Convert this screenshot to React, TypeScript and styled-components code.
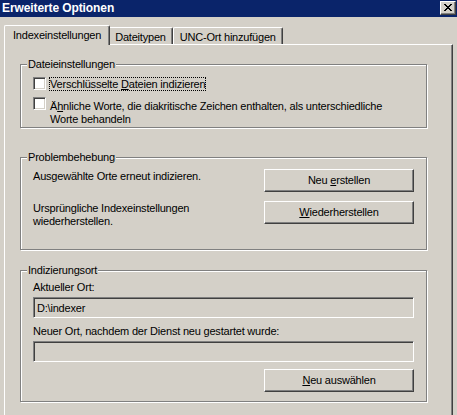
import React from "react";
import styled, { createGlobalStyle } from "styled-components";

const GlobalStyle = createGlobalStyle`
  html, body {
    margin: 0;
    padding: 0;
    background: #d4d0c8;
  }
  * { box-sizing: border-box; }
`;

const Window = styled.div`
  width: 457px;
  height: 415px;
  overflow: hidden;
  background: #d4d0c8;
  display: flex;
  flex-direction: column;
  font-family: "Liberation Sans", Arial, sans-serif;
  font-size: 11px;
  letter-spacing: -0.2px;
  line-height: 13px;
  color: #000;
`;

const TitleBar = styled.div`
  height: 17px;
  flex: none;
  background: #0a246a;
  display: flex;
  align-items: flex-start;
  justify-content: space-between;
  padding: 0 1px 0 2px;
`;

const TitleText = styled.span`
  color: #fff;
  font-weight: bold;
  font-size: 12px;
  letter-spacing: -0.1px;
  line-height: 17px;
`;

const CloseButton = styled.div`
  width: 16px;
  height: 14px;
  margin-top: 1px;
  background: #d4d0c8;
  border: 1px solid;
  border-color: #fff #404040 #404040 #fff;
  box-shadow: inset -1px -1px 0 #808080;
  display: flex;
  align-items: center;
  justify-content: center;
  padding: 0 0 1px 0;
`;

const Body = styled.div`
  flex: 1;
  display: flex;
  flex-direction: column;
  padding: 8px 4px 0 4px;
`;

const TabStrip = styled.div`
  display: flex;
  align-items: flex-end;
  height: 20px;
  margin-bottom: -1px;
  position: relative;
  z-index: 1;
`;

const Tab = styled.div<{ $active?: boolean; $afterActive?: boolean }>`
  position: relative;
  z-index: ${(p) => (p.$active ? 2 : 1)};
  height: ${(p) => (p.$active ? 20 : 17)}px;
  margin-bottom: ${(p) => (p.$active ? 0 : 1)}px;
  margin-left: ${(p) => (p.$afterActive ? -2 : 0)}px;
  padding: 3px ${(p) => (p.$active ? 8 : 6)}px 0 ${(p) => (p.$active ? 8 : 6)}px;
  background: #d4d0c8;
  border-top: 1px solid #fff;
  border-left: 1px solid #fff;
  border-right: 1px solid #404040;
  box-shadow: inset -1px 0 0 #808080;
  border-top-left-radius: 2px;
  border-top-right-radius: 2px;
  white-space: nowrap;
`;

const Panel = styled.div`
  flex: 1;
  border-top: 1px solid #fff;
  border-left: 1px solid #fff;
  border-right: 1px solid #404040;
  box-shadow: inset -1px 0 0 #808080;
  padding: 19px 0 0 15px;
`;

const Group = styled.div<{ $height: number; $gapAfter: number; $padTop: number }>`
  position: relative;
  width: 407px;
  height: ${(p) => p.$height}px;
  margin-bottom: ${(p) => p.$gapAfter}px;
  border: 1px solid #808080;
  box-shadow: 1px 1px 0 #fff, inset 1px 1px 0 #fff;
  padding: ${(p) => p.$padTop}px 12px 0 12px;
`;

const GroupTitle = styled.span`
  position: absolute;
  top: -7px;
  left: 6px;
  padding: 0 1px;
  background: #d4d0c8;
  line-height: 13px;
`;

const CheckRow = styled.label<{ $gapAfter?: number }>`
  display: flex;
  align-items: flex-start;
  gap: 3px;
  margin-bottom: ${(p) => p.$gapAfter ?? 0}px;
`;

const CheckBox = styled.input`
  appearance: none;
  -webkit-appearance: none;
  flex: none;
  margin: 0;
  width: 13px;
  height: 13px;
  background: #fff;
  border: 1px solid;
  border-color: #808080 #fff #fff #808080;
  box-shadow: inset 1px 1px 0 #404040, inset -1px -1px 0 #d4d0c8;
`;

const CheckText = styled.span<{ $focused?: boolean }>`
  border: 1px ${(p) => (p.$focused ? "dotted #000" : "solid transparent")};
  line-height: ${(p) => (p.$focused ? 12 : 13)}px;
  padding-top: ${(p) => (p.$focused ? 0 : 3)}px;
  border-top-width: ${(p) => (p.$focused ? 1 : 0)}px;
  padding-left: 0;
  padding-right: 0;
`;

const Key = styled.span`
  text-decoration: underline;
  text-underline-offset: 1px;
`;

const ActionGrid = styled.div`
  display: grid;
  grid-template-columns: 1fr 150px;
  row-gap: 9px;
`;

const ActionText = styled.div`
  padding-top: 1px;
`;

const Button = styled.button`
  width: 150px;
  height: 23px;
  padding: 0;
  margin: 0;
  background: #d4d0c8;
  border: 1px solid;
  border-color: #fff #404040 #404040 #fff;
  box-shadow: inset -1px -1px 0 #808080;
  font: inherit;
  letter-spacing: inherit;
  line-height: 13px;
  color: #000;
`;

const FieldLabel = styled.div`
  margin-bottom: 3px;
`;

const TextBox = styled.input`
  display: block;
  width: 381px;
  height: 21px;
  margin: 0 0 7px 0;
  padding: 0 3px;
  background: #d4d0c8;
  border: 1px solid;
  border-color: #808080 #fff #fff #808080;
  box-shadow: inset 1px 1px 0 #404040, inset -1px -1px 0 #d4d0c8;
  font: inherit;
  letter-spacing: inherit;
  color: #000;
  outline: none;
`;

const ButtonRow = styled.div`
  display: flex;
  justify-content: flex-end;
`;

const CloseGlyph = () => (
  <svg width="8" height="7" viewBox="0 0 8 7" shapeRendering="crispEdges">
    <path
      fill="#000"
      d="M0 0h2v1H0z M6 0h2v1H6z M1 1h2v1H1z M5 1h2v1H5z M2 2h4v1H2z M3 3h2v1H3z M2 4h4v1H2z M1 5h2v1H1z M5 5h2v1H5z M0 6h2v1H0z M6 6h2v1H6z"
    />
  </svg>
);

export default function App() {
  return (
    <>
      <GlobalStyle />
      <Window>
        <TitleBar>
          <TitleText>Erweiterte Optionen</TitleText>
          <CloseButton>
            <CloseGlyph />
          </CloseButton>
        </TitleBar>
        <Body>
          <TabStrip>
            <Tab $active>Indexeinstellungen</Tab>
            <Tab $afterActive>Dateitypen</Tab>
            <Tab>UNC-Ort hinzufügen</Tab>
          </TabStrip>
          <Panel>
            <Group $height={64} $gapAfter={29} $padTop={12}>
              <GroupTitle>Dateieinstellungen</GroupTitle>
              <CheckRow $gapAfter={6}>
                <CheckBox type="checkbox" />
                <CheckText $focused>
                  Verschlüsselte <Key>D</Key>ateien indizieren
                </CheckText>
              </CheckRow>
              <CheckRow>
                <CheckBox type="checkbox" />
                <CheckText>
                  Ä<Key>h</Key>nliche Worte, die diakritische Zeichen enthalten, als unterschiedliche
                  <br />
                  Worte behandeln
                </CheckText>
              </CheckRow>
            </Group>
            <Group $height={93} $gapAfter={20} $padTop={11}>
              <GroupTitle>Problembehebung</GroupTitle>
              <ActionGrid>
                <ActionText>Ausgewählte Orte erneut indizieren.</ActionText>
                <Button type="button">
                  Neu <Key>e</Key>rstellen
                </Button>
                <ActionText>
                  Ursprüngliche Indexeinstellungen
                  <br />
                  wiederherstellen.
                </ActionText>
                <Button type="button">
                  <Key>W</Key>iederherstellen
                </Button>
              </ActionGrid>
            </Group>
            <Group $height={132} $gapAfter={0} $padTop={10}>
              <GroupTitle>Indizierungsort</GroupTitle>
              <FieldLabel>Aktueller Ort:</FieldLabel>
              <TextBox readOnly value="D:\indexer" />
              <FieldLabel>Neuer Ort, nachdem der Dienst neu gestartet wurde:</FieldLabel>
              <TextBox readOnly value="" />
              <ButtonRow>
                <Button type="button">
                  <Key>N</Key>eu auswählen
                </Button>
              </ButtonRow>
            </Group>
          </Panel>
        </Body>
      </Window>
    </>
  );
}
